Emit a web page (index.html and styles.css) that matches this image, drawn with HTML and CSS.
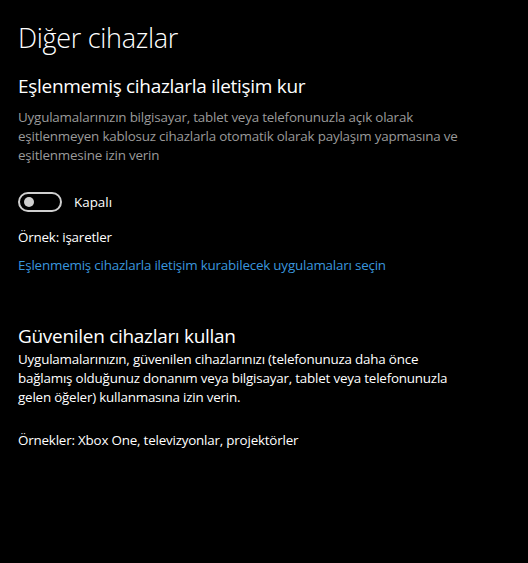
FILE: index.html
```html
<!DOCTYPE html>
<html lang="tr">
<head>
    <meta charset="UTF-8">
    <meta name="viewport" content="width=device-width, initial-scale=1.0">
    <link rel="stylesheet" href="styles.css">
</head>
<body>
    <div class="page">
        <h1 class="page-title">Diğer cihazlar</h1>

        <section class="group">
            <h2>Eşlenmemiş cihazlarla iletişim kur</h2>
            <p class="desc muted">Uygulamalarınızın bilgisayar, tablet veya telefonunuzla açık olarak eşitlenmeyen kablosuz cihazlarla otomatik olarak paylaşım yapmasına ve eşitlenmesine izin verin</p>

            <label class="toggle-row">
                <span class="toggle"><span class="knob"></span></span>
                <span class="toggle-label">Kapalı</span>
            </label>

            <p class="example">Örnek: işaretler</p>
            <a class="link" href="#">Eşlenmemiş cihazlarla iletişim kurabilecek uygulamaları seçin</a>
        </section>

        <section class="group trusted">
            <h2>Güvenilen cihazları kullan</h2>
            <p class="desc">Uygulamalarınızın, güvenilen cihazlarınızı (telefonunuza daha önce bağlamış olduğunuz donanım veya bilgisayar, tablet veya telefonunuzla gelen öğeler) kullanmasına izin verin.</p>
            <p class="example">Örnekler: Xbox One, televizyonlar, projektörler</p>
        </section>
    </div>
</body>
</html>
```

FILE: styles.css
```css
body {
    margin: 0;
    background-color: #000;
    color: #fff;
    font-family: 'Open Sans', 'Noto Sans', sans-serif;
}

.page {
    padding: 18px 17px 0 18px;
    width: 440px;
}

.page-title {
    margin: 0;
    font-size: 27px;
    font-weight: 300;
    line-height: 40px;
    letter-spacing: -0.3px;
}

h2 {
    margin: 0;
    font-size: 19px;
    font-weight: 400;
    line-height: 28px;
    letter-spacing: -0.3px;
}

.group {
    margin-top: 14px;
}

.group h2 {
    margin-bottom: 8px;
}

.desc {
    margin: 0;
    font-size: 13.4px;
    line-height: 19px;
    letter-spacing: -0.2px;
}

.muted {
    color: #9a9a9a;
}

.toggle-row {
    display: flex;
    align-items: center;
    gap: 12px;
    margin-top: 27px;
}

.toggle {
    width: 36px;
    height: 16px;
    border: 2px solid #cfcfcf;
    border-radius: 10px;
    display: flex;
    align-items: center;
    padding-left: 4px;
    box-sizing: content-box;
}

.knob {
    width: 10px;
    height: 10px;
    border-radius: 50%;
    background-color: #cfcfcf;
}

.toggle-label {
    font-size: 13.4px;
}

.example {
    margin: 16px 0 0;
    font-size: 13.4px;
    line-height: 19px;
    letter-spacing: -0.2px;
}

.link {
    display: block;
    margin-top: 9px;
    color: #3a96dd;
    text-decoration: none;
    font-size: 13.4px;
    line-height: 19px;
    letter-spacing: -0.2px;
}

.trusted {
    margin-top: 47px;
}

.trusted h2 {
    margin-bottom: 0;
}

.trusted .example {
    margin-top: 24px;
}
```
